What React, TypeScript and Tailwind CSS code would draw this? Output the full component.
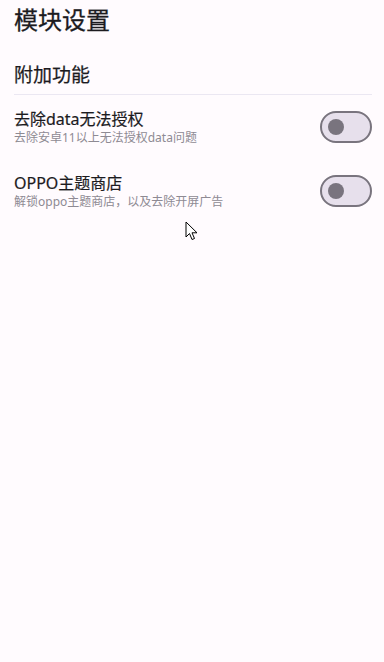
import { useState } from 'react'

const font = { fontFamily: '"Noto Sans", "Noto Sans CJK SC", sans-serif' }

type Item = { title: string; desc: string }

const items: Item[] = [
  { title: '去除data无法授权', desc: '去除安卓11以上无法授权data问题' },
  { title: 'OPPO主题商店', desc: '解锁oppo主题商店，以及去除开屏广告' },
]

function Toggle({ on, onChange }: { on: boolean; onChange: () => void }) {
  return (
    <button
      onClick={onChange}
      className={`flex h-[32px] w-[52px] shrink-0 items-center rounded-full border-2 px-[6px] ${
        on ? 'justify-end border-[#6750a4] bg-[#6750a4]' : 'justify-start border-[#79747e] bg-[#e7e0ec]'
      }`}
    >
      <span className={`block h-[16px] w-[16px] rounded-full ${on ? 'bg-white' : 'bg-[#79747e]'}`} />
    </button>
  )
}

function Cursor() {
  return (
    <svg className="absolute left-[185px] top-[221px]" width="14" height="20" viewBox="0 0 14 20">
      <path
        d="M1 1 L1 16 L4.5 12.5 L7 18.5 L9.5 17.5 L7 11.8 L12 11.8 Z"
        fill="white"
        stroke="black"
        strokeWidth="1"
        strokeLinejoin="round"
      />
    </svg>
  )
}

export default function App() {
  const [state, setState] = useState<boolean[]>([false, false])

  return (
    <div className="relative min-h-[662px] w-full bg-[#fffbfe] text-[#1c1b1f]" style={font}>
      <div className="pl-[14px] pr-[12px] pt-[4px]">
        {/* medium weight isn't installed, so thicken regular a little */}
        <h1 className="text-[24px] leading-[32px] font-normal [-webkit-text-stroke:0.3px_currentColor]">模块设置</h1>

        <h2 className="mt-[26px] text-[19px] leading-[26px] font-normal [-webkit-text-stroke:0.25px_currentColor]">
          附加功能
        </h2>
        <div className="mt-[6px] h-px bg-[#ebe7f2]" />

        {items.map((item, i) => (
          <div key={item.title} className="flex h-[64px] items-center justify-between gap-3">
            <div className="flex flex-col">
              <span className="text-[16px] leading-[21px] font-normal [-webkit-text-stroke:0.2px_currentColor]">
                {item.title}
              </span>
              <span className="text-[12px] leading-[16px] text-[#8e8a93]">{item.desc}</span>
            </div>
            <Toggle on={state[i]} onChange={() => setState((s) => s.map((v, j) => (j === i ? !v : v)))} />
          </div>
        ))}
      </div>
      <Cursor />
    </div>
  )
}
